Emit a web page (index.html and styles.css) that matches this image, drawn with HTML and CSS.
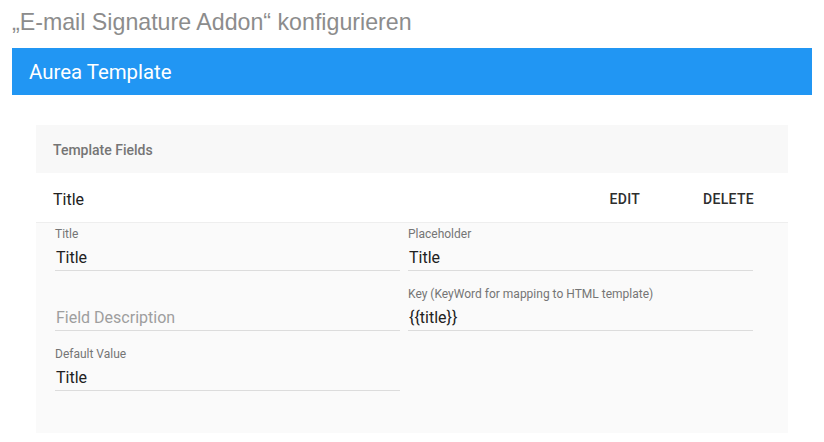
FILE: index.html
```html
<!DOCTYPE html>
<html lang="de">
<head>
<meta charset="utf-8">
<title>E-mail Signature Addon</title>
<link rel="stylesheet" href="styles.css">
</head>
<body>
<h1 class="page-title">„E-mail Signature Addon“ konfigurieren</h1>
<div class="toolbar">Aurea Template</div>
<section class="card">
  <div class="card-header">Template Fields</div>
  <div class="item-row">
    <span class="item-name">Title</span>
    <div class="actions">
      <button class="btn">EDIT</button>
      <button class="btn">DELETE</button>
    </div>
  </div>
  <div class="fields">
    <div class="field">
      <label class="field-label">Title</label>
      <div class="field-input">Title</div>
    </div>
    <div class="field">
      <label class="field-label">Placeholder</label>
      <div class="field-input">Title</div>
    </div>
    <div class="field">
      <label class="field-label"></label>
      <div class="field-input placeholder">Field Description</div>
    </div>
    <div class="field">
      <label class="field-label">Key (KeyWord for mapping to HTML template)</label>
      <div class="field-input">{{title}}</div>
    </div>
    <div class="field">
      <label class="field-label">Default Value</label>
      <div class="field-input">Title</div>
    </div>
  </div>
</section>
</body>
</html>
```
FILE: styles.css
```css
html, body {
  margin: 0;
  padding: 0;
  background: #ffffff;
}
body {
  padding: 0 12px;
  font-family: Roboto, "Noto Sans", sans-serif;
}
.page-title {
  margin: 0;
  height: 48px;
  line-height: 44px;
  font-family: "Liberation Sans", Arial, sans-serif;
  font-weight: 400;
  font-size: 23.2px;
  color: #8c8c8c;
}
.toolbar {
  height: 47px;
  line-height: 48px;
  background: #2196f3;
  color: #ffffff;
  font-size: 20.4px;
  padding-left: 17px;
}
.card {
  margin: 30px 24px 0;
}
.card-header {
  height: 48px;
  line-height: 50px;
  background: #f8f8f8;
  padding-left: 17px;
  font-size: 14px;
  font-weight: 500;
  color: #757575;
}
.item-row {
  box-sizing: border-box;
  height: 50px;
  display: flex;
  align-items: center;
  justify-content: space-between;
  padding: 3px 34px 0 17px;
  background: #ffffff;
  border-bottom: 1px solid #eeeeee;
}
.item-name {
  font-size: 16px;
  color: #212121;
}
.actions {
  display: flex;
  gap: 63px;
}
.btn {
  border: none;
  background: none;
  padding: 0;
  margin: 0;
  font-family: Roboto, "Noto Sans", sans-serif;
  font-size: 14px;
  font-weight: 500;
  letter-spacing: 0.3px;
  color: #2e2e2e;
}
.fields {
  background: #fafafa;
  display: grid;
  grid-template-columns: 345px 345px;
  column-gap: 8px;
  row-gap: 16px;
  padding: 4px 35px 42px 19px;
}
.field {
  display: flex;
  flex-direction: column;
}
.field-label {
  height: 13px;
  line-height: 14px;
  font-size: 12px;
  color: #757575;
}
.field-input {
  height: 27px;
  padding-top: 3px;
  line-height: 30px;
  font-size: 16px;
  color: #212121;
  padding-left: 1px;
  border-bottom: 1px solid #dcdcdc;
}
.field-input.placeholder {
  color: #9e9e9e;
}
```
